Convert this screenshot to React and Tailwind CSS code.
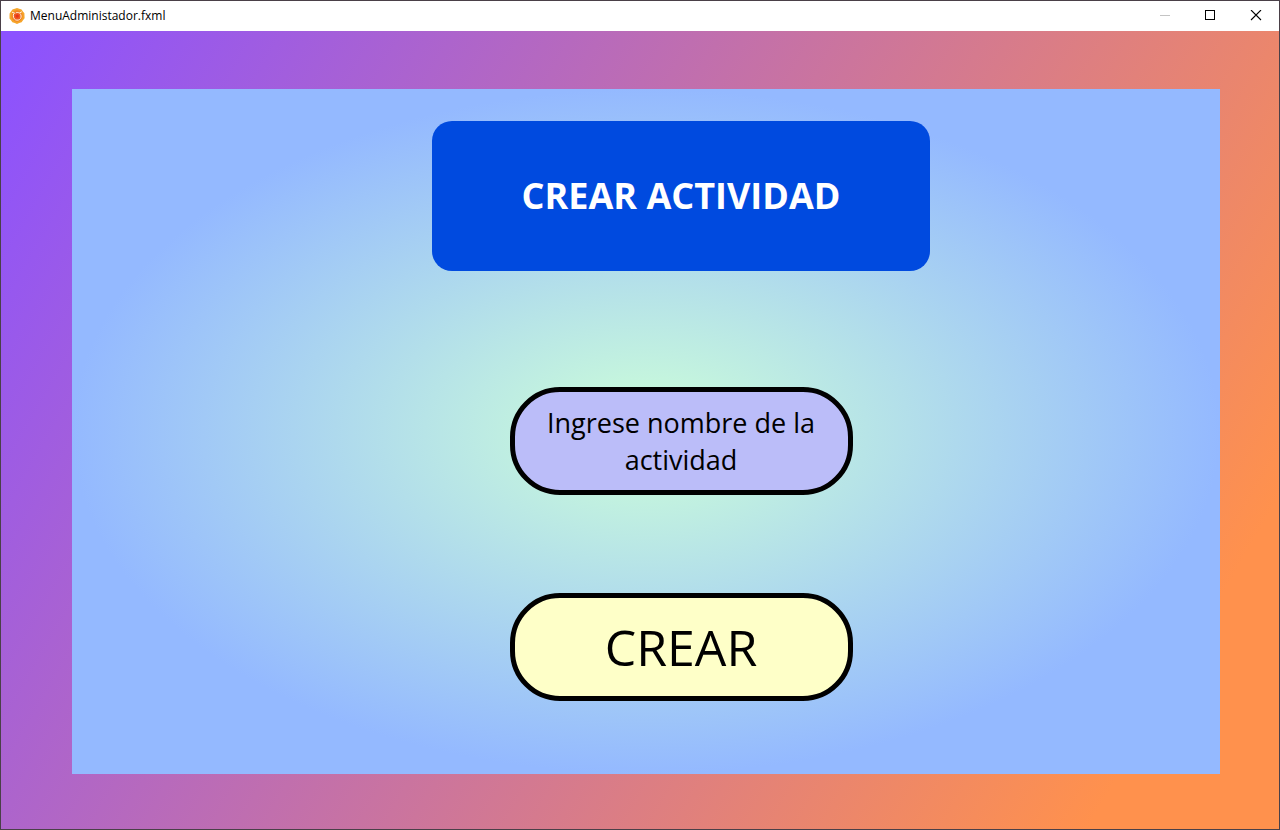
function AppIcon() {
  return (
    <svg viewBox="0 0 16 16" className="size-4" aria-hidden="true">
      <path
        d="M8 0l2.200.7 2.400.7 1.300 2 1.500 1.900.1 2.700.1 2.300-1.600 2-1.400 2-2.400.8L8 15.900l-2.200-.8-2.400-.8-1.400-2-1.500-1.900V8l.1-2.600L2 3.400l1.400-2L5.800.7z"
        fill="#f6a52a"
      />
      <circle cx="8" cy="8" r="5.700" fill="#f08624" />
      <circle cx="8.100" cy="8.300" r="3.900" fill="#ee5a22" />
      <path
        d="M3.300 4.300 5.800 5.300M4.500 6.200c-.6 2.400.2 4.600 2 5.600 1.900.8 4 .2 5-1.300.9-1.600.8-3.400-.2-4.700M7.200 4.700c1.100-.4 2.200-.2 3.100.3L12.500 4"
        fill="none"
        stroke="#fff3e2"
        strokeWidth="1"
        strokeLinecap="round"
      />
      <circle cx="8.200" cy="8.100" r="1.700" fill="#e8331c" />
    </svg>
  );
}

const captionButton = "flex h-full w-[46px] items-center justify-center";

function TitleBar() {
  return (
    <header className="flex h-[30px] shrink-0 items-center bg-white pl-2">
      <AppIcon />
      <h1 className="ml-[5px] flex-1 font-['Open_Sans',sans-serif] text-xs text-black">
        MenuAdministador.fxml
      </h1>
      <div className="flex h-full">
        <button type="button" aria-label="Minimizar" disabled className={captionButton}>
          <svg viewBox="0 0 12 12" className="size-3" shapeRendering="crispEdges">
            <path d="M2 5.500h10" stroke="#c4c4c4" />
          </svg>
        </button>
        <button type="button" aria-label="Maximizar" className={captionButton}>
          <svg viewBox="0 0 12 12" className="size-3" shapeRendering="crispEdges">
            <path d="M1.500 .5h9v9h-9z" fill="none" stroke="#000" />
          </svg>
        </button>
        <button type="button" aria-label="Cerrar" className={captionButton}>
          <svg viewBox="0 0 12 12" className="size-3">
            <path d="m1 0 10 10M11 0 1 10" stroke="#000" strokeWidth="1.100" />
          </svg>
        </button>
      </div>
    </header>
  );
}

export default function App() {
  return (
    <div className="flex min-h-screen flex-col border border-[#4a4048] bg-white font-['Open_Sans','Noto_Sans',sans-serif]">
      <TitleBar />
      <main className="flex flex-1 bg-[linear-gradient(120deg,#8c52ff_1%,#ff914d_89%)] pt-[58px] pr-[59px] pb-[55px] pl-[71px]">
        <form
          className="flex flex-1 flex-col items-center bg-[radial-gradient(ellipse_farthest-side_at_center,#cdffd8,#94b9ff)] pt-8 pb-[73px] pl-[70px]"
          onSubmit={(e) => e.preventDefault()}
        >
          <h2 className="flex h-[150px] w-full max-w-[498px] items-center justify-center rounded-[20px] bg-[#004adf] text-4xl font-bold text-white">
            CREAR ACTIVIDAD
          </h2>
          <textarea
            aria-label="Nombre de la actividad"
            placeholder="Ingrese nombre de la actividad"
            rows={2}
            className="mt-[116px] h-[108px] w-full max-w-[343px] resize-none overflow-hidden rounded-[50px] border-[5px] border-black bg-[#bbbdf9] px-6 py-3 text-center text-[27px] leading-[37px] text-black placeholder:text-black placeholder:opacity-100"
          />
          <button
            type="submit"
            className="mt-[98px] h-[108px] w-full max-w-[343px] rounded-[50px] border-[5px] border-black bg-[#feffc8] text-[50px] leading-none text-black"
          >
            CREAR
          </button>
        </form>
      </main>
    </div>
  );
}
